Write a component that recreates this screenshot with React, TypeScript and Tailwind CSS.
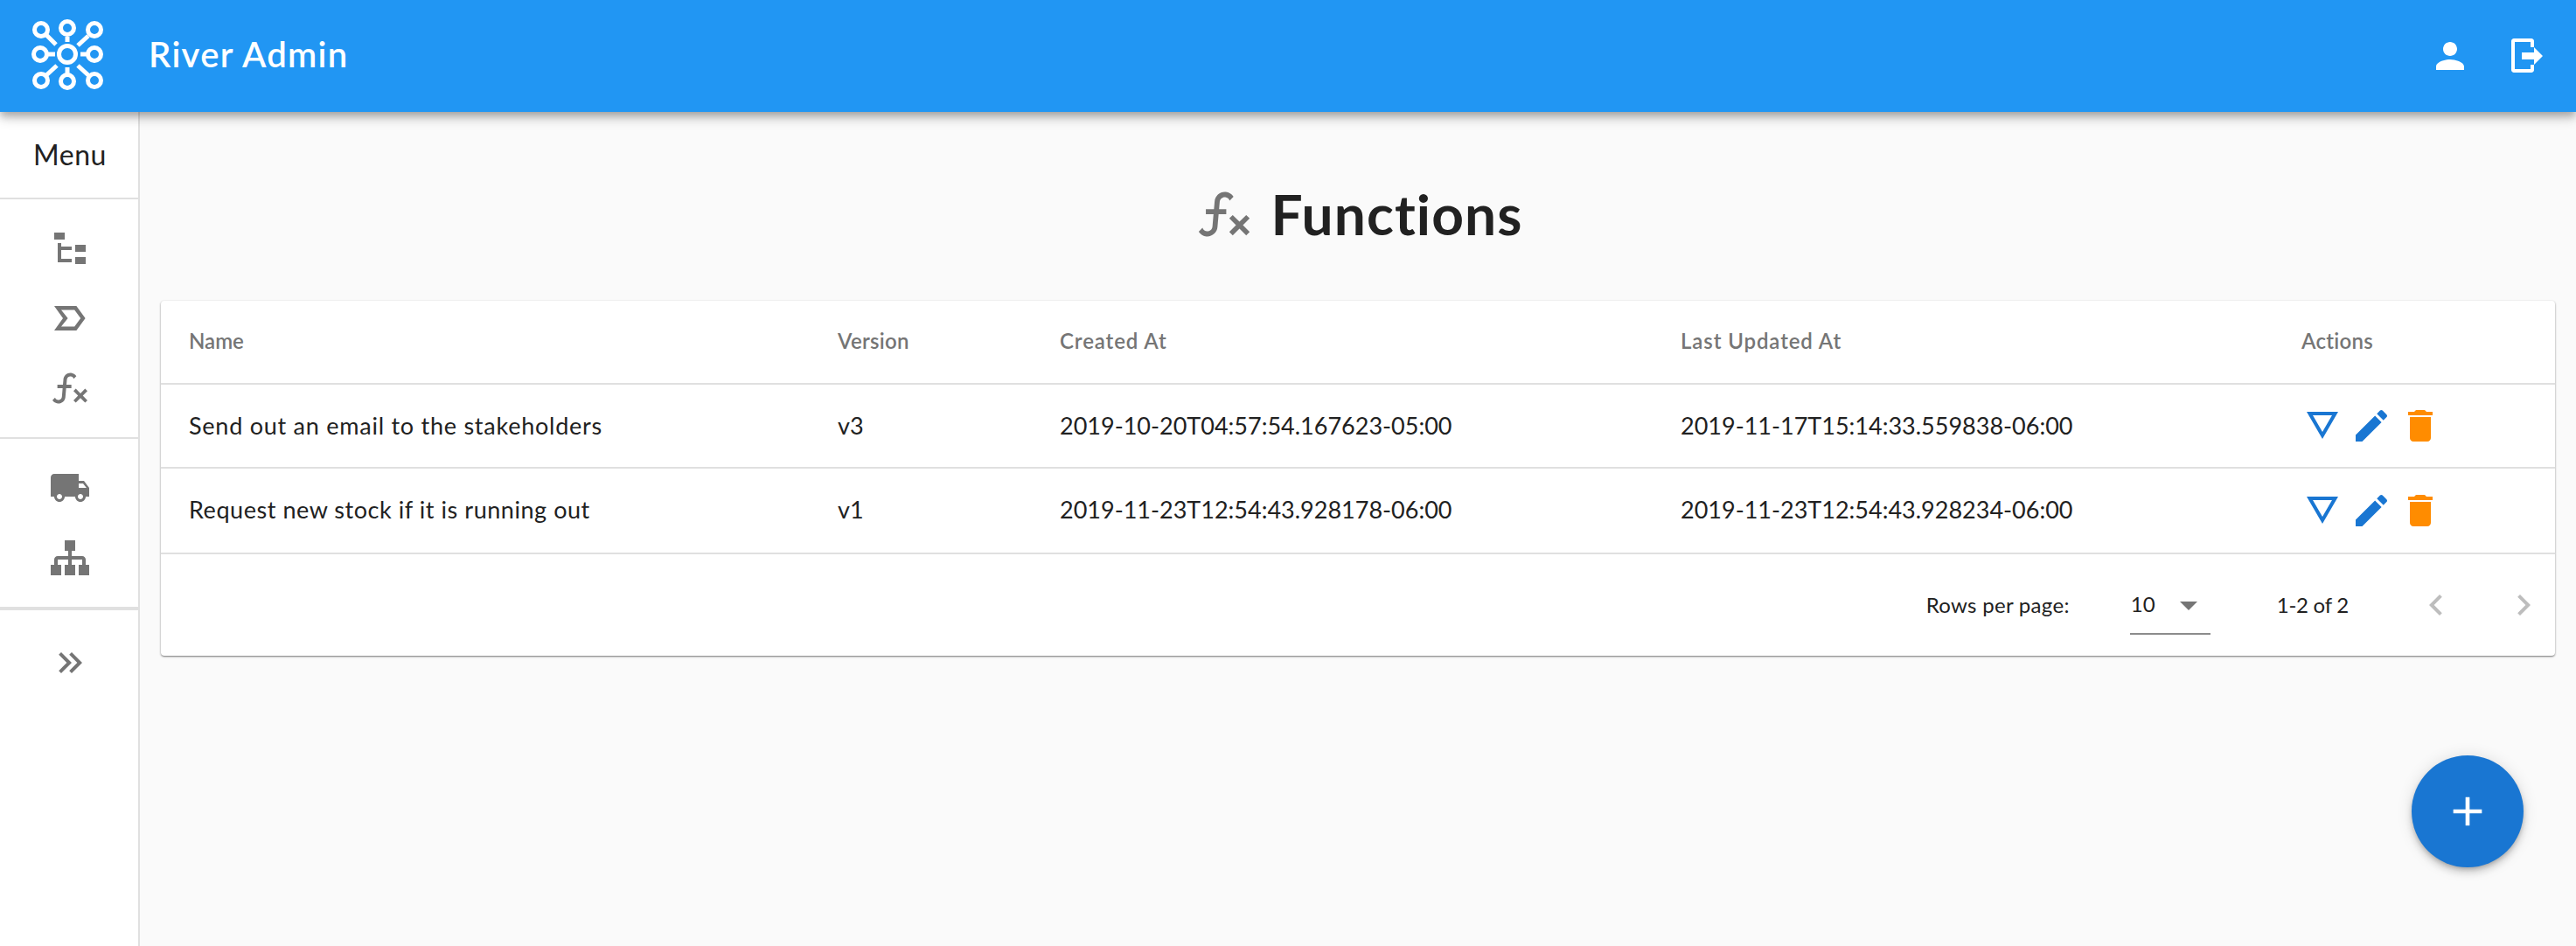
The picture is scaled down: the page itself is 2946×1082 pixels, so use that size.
const FONT = 'font-["Lato","Noto_Sans",sans-serif]';

const PATHS = {
  tree: 'M3,3H9V7H3V3M15,10H21V14H15V10M15,17H21V21H15V17M13,13H7V18H13V20H7L5,20V9H7V11H13V13Z',
  label: 'M3 5H15.7L20.8 12L15.7 19H3L8 12Z M7 7.2L10.8 12L7 16.8H14.6L18.1 12L14.6 7.2Z',
  fx: 'M12.42,5.29C11.32,5.19 10.35,6 10.25,7.11L10,10H12.82V12H9.82L9.38,17.07C9.18,19.27 7.24,20.9 5.04,20.7C3.79,20.59 2.66,19.9 2,18.83L3.5,17.33C3.83,18.38 4.96,18.97 6,18.63C6.78,18.39 7.33,17.7 7.4,16.89L7.82,12H4.82V10H8L8.27,6.93C8.46,4.73 10.39,3.1 12.6,3.28C13.86,3.39 15,4.09 15.66,5.17L14.16,6.67C13.91,5.9 13.23,5.36 12.42,5.29M22,13.65L20.65,12.3L18,14.94L15.35,12.3L14,13.65L16.64,16.29L14,18.94L15.35,20.29L18,17.64L20.65,20.29L22,18.94L19.36,16.29L22,13.65Z',
  truck: 'M20 8h-3V4H3c-1.1 0-2 .9-2 2v11h2c0 1.66 1.34 3 3 3s3-1.34 3-3h6c0 1.66 1.34 3 3 3s3-1.34 3-3h2v-5l-3-4zM6 18.5c-.83 0-1.5-.67-1.5-1.5s.67-1.5 1.5-1.5 1.5.67 1.5 1.5-.67 1.5-1.5 1.5zm13.5-9l1.96 2.5H17V9.5h2.5zm-1.5 9c-.83 0-1.5-.67-1.5-1.5s.67-1.5 1.5-1.5 1.5.67 1.5 1.5-.67 1.5-1.5 1.5z',
  sitemap: 'M9,2V8H11V11H5C3.89,11 3,11.89 3,13V16H1V22H7V16H5V13H11V16H9V22H15V16H13V13H19V16H17V22H23V16H21V13C21,11.89 20.1,11 19,11H13V8H15V2H9Z',
  chevrons: 'M5.59,7.41L7,6L13,12L7,18L5.59,16.59L10.17,12L5.59,7.41M11.59,7.41L13,6L19,12L13,18L11.59,16.59L16.17,12L11.59,7.41Z',
  person: 'M12 12c2.21 0 4-1.79 4-4s-1.79-4-4-4-4 1.79-4 4 1.79 4 4 4zm0 2c-2.67 0-8 1.34-8 4v2h16v-2c0-2.66-5.33-4-8-4z',
  edit: 'M3 17.25V21h3.75L17.81 9.94l-3.75-3.75L3 17.25zM20.71 7.04c.39-.39.39-1.02 0-1.41l-2.34-2.34c-.39-.39-1.02-.39-1.41 0l-1.83 1.83 3.75 3.75 1.83-1.83z',
  trash: 'M6 19c0 1.1.9 2 2 2h8c1.1 0 2-.9 2-2V7H6v12zM19 4h-3.5l-1-1h-5l-1 1H5v2h14V4z',
  triangle: 'M3 4H21L12 19.5Z M6.5 6L12 15.5L17.5 6Z',
  logout: 'M3 3.5C3 2.7 3.7 2 4.5 2H14.5C15.3 2 16 2.7 16 3.5V7H14V4H5V19.5H14V17H16V20C16 20.8 15.3 21.5 14.5 21.5H4.5C3.7 21.5 3 20.8 3 20ZM9 10H16V7L21 12L16 17V14H9Z',
  left: 'M15.41 7.41L14 6l-6 6 6 6 1.41-1.41L10.83 12z',
  right: 'M10 6L8.59 7.41 13.17 12l-4.58 4.59L10 18l6-6z',
  caret: 'M7 10l5 5 5-5z',
  plus: 'M19 13h-6v6h-2v-6H5v-2h6V5h2v6h6v2z',
};

const Icon = ({ d, className }: { d: string; className: string }) => (
  <svg viewBox="0 0 24 24" className={className} fill="currentColor" fillRule="evenodd">
    <path d={d} />
  </svg>
);

const Logo = () => {
  const rings = [
    [47, 34], [77, 32], [108, 34],
    [46, 62], [108, 62],
    [47, 92], [77, 93], [108, 92],
  ];
  const spokes = [
    [53, 40, 64, 51], [77, 42, 77, 48], [101, 41, 89, 52],
    [55, 62, 63, 62], [92, 62, 100, 62],
    [53, 86, 65, 75], [77, 77, 77, 84], [89, 75, 101, 86],
  ];
  return (
    <svg viewBox="0 0 154 128" className="w-[154px] h-[128px] shrink-0" fill="none" stroke="white" strokeWidth="5">
      <circle cx="77" cy="62" r="9.5" />
      {rings.map(([cx, cy]) => (
        <circle key={`${cx}-${cy}`} cx={cx} cy={cy} r="7.5" />
      ))}
      {spokes.map(([x1, y1, x2, y2]) => (
        <line key={`${x1}-${y1}`} x1={x1} y1={y1} x2={x2} y2={y2} />
      ))}
    </svg>
  );
};

const rows = [
  {
    name: 'Send out an email to the stakeholders',
    version: 'v3',
    created: '2019-10-20T04:57:54.167623-05:00',
    updated: '2019-11-17T15:14:33.559838-06:00',
    height: 'h-[96px]',
    cell: 'pl-[32px]',
    nameSpacing: 'tracking-[0.75px]',
  },
  {
    name: 'Request new stock if it is running out',
    version: 'v1',
    created: '2019-11-23T12:54:43.928178-06:00',
    updated: '2019-11-23T12:54:43.928234-06:00',
    height: 'h-[98px]',
    cell: 'pl-[32px] mb-[2px]',
    nameSpacing: 'tracking-[0.55px]',
  },
];

const COLS = 'grid grid-cols-[742px_254px_710px_710px_1fr] items-center';

const Sidebar = () => (
  <aside className="w-[160px] shrink-0 bg-white shadow-[inset_-2px_0_0_#e0e0e0] flex flex-col">
    <div className="h-[98px] flex items-center justify-center text-[32px] text-[#212121] tracking-[0.5px]">Menu</div>
    <div className="h-[2px] bg-[#e0e0e0]" />
    <div className="py-[32px] flex flex-col items-center gap-[32px] text-[#757575]">
      <Icon d={PATHS.tree} className="w-12 h-12" />
      <Icon d={PATHS.label} className="w-12 h-12" />
      <Icon d={PATHS.fx} className="w-12 h-12" />
    </div>
    <div className="h-[2px] bg-[#e0e0e0]" />
    <div className="py-[32px] flex flex-col items-center gap-[32px] text-[#757575]">
      <Icon d={PATHS.truck} className="w-12 h-12" />
      <Icon d={PATHS.sitemap} className="w-12 h-12" />
    </div>
    <div className="h-[4px] bg-[#e0e0e0]" />
    <div className="pt-[36px] flex justify-center text-[#757575]">
      <Icon d={PATHS.chevrons} className="w-12 h-12" />
    </div>
  </aside>
);

export default function App() {
  return (
    <div className={`${FONT} h-[1082px] flex flex-col bg-[#fafafa] overflow-hidden`}>
      <header className="relative z-10 h-[128px] shrink-0 bg-[#2196f3] text-white flex items-center shadow-[0_4px_8px_-1px_rgba(0,0,0,0.2),0_8px_10px_0_rgba(0,0,0,0.14),0_2px_20px_0_rgba(0,0,0,0.12)]">
        <Logo />
        <h1 className="ml-[16px] mb-[4px] text-[40px] font-semibold tracking-[1.3px]">River Admin</h1>
        <div className="ml-auto flex items-center gap-[40px] pr-[32px]">
          <Icon d={PATHS.person} className="w-12 h-12" />
          <Icon d={PATHS.logout} className="w-12 h-12" />
        </div>
      </header>

      <div className="flex flex-1 min-h-0">
        <Sidebar />

        <main className="flex-1 px-[24px] pt-[82px]">
          <div className="flex items-center justify-center gap-[19px] h-[70px] mb-[64px]">
            <Icon d={PATHS.fx} className="w-[70px] h-[70px] text-[#757575]" />
            <h2 className="text-[64px] font-bold text-[#212121] tracking-[1.1px]">Functions</h2>
          </div>

          <section className="bg-white rounded-[4px] shadow-[0_1px_3px_0_rgba(0,0,0,0.2),0_1px_2px_0_rgba(0,0,0,0.3),0_2px_1px_-1px_rgba(0,0,0,0.12)]">
            <div className={`${COLS} h-[96px] pb-[2px] border-b-2 border-[#e0e0e0] text-[24px] font-semibold text-[#757575]`}>
              <div className="pl-[32px]">Name</div>
              <div className="pl-[32px] tracking-[0.3px]">Version</div>
              <div className="pl-[32px] tracking-[0.9px]">Created At</div>
              <div className="pl-[32px] tracking-[0.9px]">Last Updated At</div>
              <div className="pl-[32px] tracking-[0.3px]">Actions</div>
            </div>

            {rows.map((row) => (
              <div key={row.name} className={`${COLS} ${row.height} border-b-2 border-[#e0e0e0] text-[27px] text-[#212121]`}>
                <div className={`${row.cell} ${row.nameSpacing}`}>{row.name}</div>
                <div className={row.cell}>{row.version}</div>
                <div className={row.cell}>{row.created}</div>
                <div className={row.cell}>{row.updated}</div>
                <div className="pl-[32px] flex gap-[8px]">
                  <Icon d={PATHS.triangle} className="w-12 h-12 text-[#1976d2]" />
                  <Icon d={PATHS.edit} className="w-12 h-12 text-[#1976d2]" />
                  <Icon d={PATHS.trash} className="w-12 h-12 text-[#ff8c00]" />
                </div>
              </div>
            ))}

            <div className="h-[116px] flex items-center justify-end text-[24px] text-[#212121] pr-[12px]">
              <span className="tracking-[0.3px]">Rows per page:</span>
              <div className="ml-[69px] w-[92px] h-[68px] border-b-2 border-[#8c8c8c] flex items-center pl-[1px] relative">
                <span>10</span>
                <Icon d={PATHS.caret} className="w-12 h-12 absolute left-[43px] top-[10px] text-[#757575]" />
              </div>
              <span className="ml-[76px] tracking-[-0.25px]">1-2 of 2</span>
              <Icon d={PATHS.left} className="w-12 h-12 ml-[76px] text-[#bdbdbd]" />
              <Icon d={PATHS.right} className="w-12 h-12 ml-[52px] text-[#bdbdbd]" />
            </div>
          </section>
        </main>
      </div>

      <button className="fixed right-[60px] bottom-[90px] w-[128px] h-[128px] rounded-full bg-[#1976d2] text-white flex items-center justify-center shadow-[0_3px_5px_-1px_rgba(0,0,0,0.2),0_6px_10px_0_rgba(0,0,0,0.14),0_1px_18px_0_rgba(0,0,0,0.12)]">
        <Icon d={PATHS.plus} className="w-[56px] h-[56px]" />
      </button>
    </div>
  );
}
